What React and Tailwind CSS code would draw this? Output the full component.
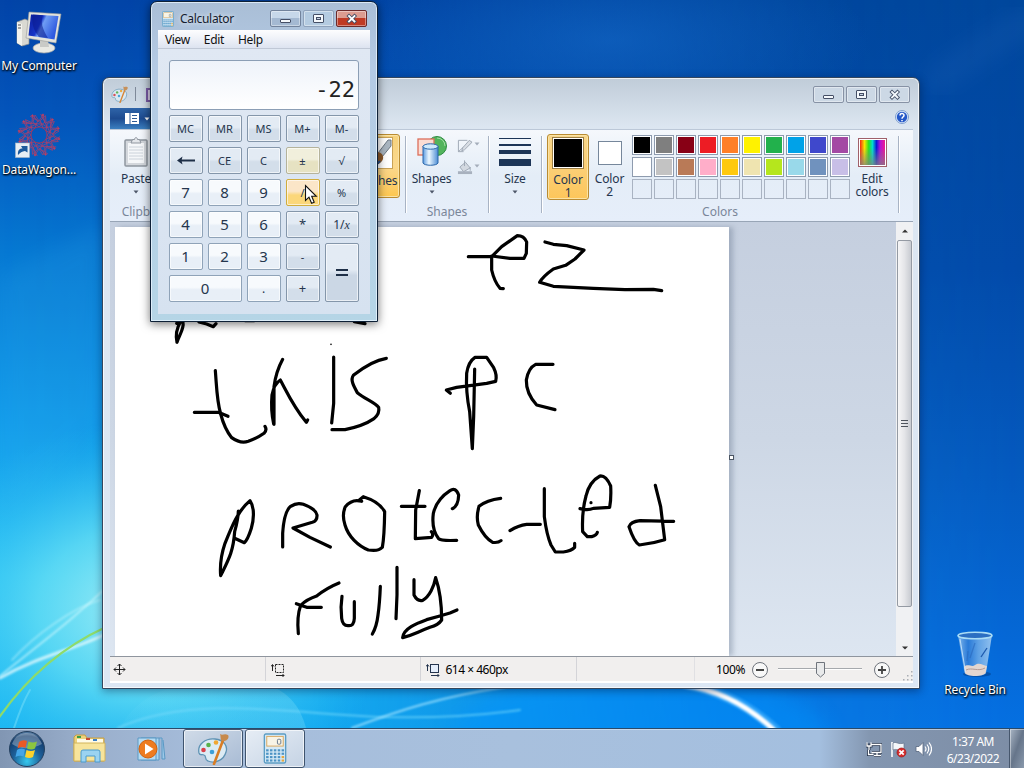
import React from "react";

const FONT = "font-['Noto_Sans','Open_Sans',sans-serif]";

function Wallpaper() {
  return (
    <svg className="absolute inset-0" width="1024" height="768" viewBox="0 0 1024 768">
      <defs>
        <linearGradient id="wl" x1="0" y1="0" x2="0" y2="1">
          <stop offset="0" stopColor="#0244a8" />
          <stop offset="0.15" stopColor="#0455bb" />
          <stop offset="0.33" stopColor="#0679d3" />
          <stop offset="0.55" stopColor="#109bea" />
          <stop offset="0.75" stopColor="#22bdf3" />
          <stop offset="0.95" stopColor="#16b4f2" />
        </linearGradient>
        <linearGradient id="wr" x1="0" y1="0" x2="0" y2="1">
          <stop offset="0" stopColor="#00479c" />
          <stop offset="0.35" stopColor="#024aa9" />
          <stop offset="0.6" stopColor="#0458bd" />
          <stop offset="0.85" stopColor="#0568d8" />
          <stop offset="1" stopColor="#0472e6" />
        </linearGradient>
        <linearGradient id="wm" x1="0" x2="1">
          <stop offset="0" stopColor="#fff" stopOpacity="0" />
          <stop offset="0.3" stopColor="#fff" stopOpacity="0.15" />
          <stop offset="0.7" stopColor="#fff" stopOpacity="0.8" />
          <stop offset="1" stopColor="#fff" />
        </linearGradient>
        <mask id="mr"><rect width="1024" height="768" fill="url(#wm)" /></mask>
        <radialGradient id="glow">
          <stop offset="0" stopColor="#b4f4f6" stopOpacity="0.95" />
          <stop offset="0.45" stopColor="#6fe4f5" stopOpacity="0.7" />
          <stop offset="1" stopColor="#28c0f5" stopOpacity="0" />
        </radialGradient>
        <radialGradient id="topglow">
          <stop offset="0" stopColor="#1469c8" stopOpacity="0.6" />
          <stop offset="1" stopColor="#1469c8" stopOpacity="0" />
        </radialGradient>
        <linearGradient id="beam" x1="0" x2="1">
          <stop offset="0" stopColor="#8fe5fa" stopOpacity="0.1" />
          <stop offset="1" stopColor="#9deefa" stopOpacity="0.6" />
        </linearGradient>
        <filter id="b1" x="-20%" y="-20%" width="140%" height="140%"><feGaussianBlur stdDeviation="1" /></filter>
        <filter id="b6" x="-30%" y="-30%" width="160%" height="160%"><feGaussianBlur stdDeviation="10" /></filter>
      </defs>
      <rect width="1024" height="768" fill="url(#wl)" />
      <rect width="1024" height="768" fill="url(#wr)" mask="url(#mr)" />
      <ellipse cx="610" cy="40" rx="260" ry="90" fill="url(#topglow)" />
      <ellipse cx="150" cy="610" rx="250" ry="190" fill="url(#glow)" />
      <ellipse cx="640" cy="740" rx="190" ry="70" fill="#0694ff" opacity="0.45" filter="url(#b6)" />
      <path d="M0 275 L104 225 L104 420 L0 520Z" fill="#4ab8ef" opacity="0.12" filter="url(#b6)" />
      <path d="M120 728 C140 690 180 680 240 680 C285 682 300 705 306 728Z" fill="url(#beam)" opacity="0.4" />
      <g fill="none" strokeLinecap="round">
        <path d="M0 676 C45 640 75 618 112 582" stroke="#d9fbff" strokeWidth="1.6" opacity="0.7" filter="url(#b1)" />
        <path d="M0 678 C40 655 75 650 110 632" stroke="#effdff" strokeWidth="3" opacity="0.75" filter="url(#b1)" />
        <path d="M12 660 C35 635 72 608 100 600" stroke="#d9fbff" strokeWidth="1.5" opacity="0.5" filter="url(#b1)" />
        <path d="M-2 719 C25 680 60 648 106 627" stroke="#8edb6a" strokeWidth="2.2" />
        <path d="M14 728 C20 710 24 700 30 690" stroke="#8ee8fb" strokeWidth="2" opacity="0.4" />
        <path d="M118 728 C180 700 260 708 330 714 C400 720 460 718 520 710" stroke="#7bdcfb" strokeWidth="2" opacity="0.6" filter="url(#b1)" />
        <path d="M352 728 C400 710 440 697 505 687" stroke="#9fe2ff" strokeWidth="2" opacity="0.8" filter="url(#b1)" />
        <path d="M686 684 C720 691 750 706 776 730" stroke="#46b4ff" strokeWidth="10" opacity="0.6" filter="url(#b1)" />
        <path d="M684 685 C720 690 748 706 774 730" stroke="#fff" strokeWidth="5" filter="url(#b1)" />
        <path d="M940 78 C965 60 995 40 1024 24" stroke="#3a79c8" strokeWidth="30" opacity="0.12" filter="url(#b6)" />
      </g>
    </svg>
  );
}

function MyComputerIcon() {
  return (
    <svg width="48" height="44" viewBox="0 0 48 44">
      <defs>
        <linearGradient id="scr" x1="0" y1="0" x2="1" y2="0.4">
          <stop offset="0" stopColor="#0b1d9a" />
          <stop offset="0.45" stopColor="#1736c8" />
          <stop offset="0.55" stopColor="#6f9df4" />
          <stop offset="1" stopColor="#2f5ae0" />
        </linearGradient>
      </defs>
      <path d="M2 12 L10 9 L14 11 L14 34 L7 36 L2 33Z" fill="#d9d9d2" stroke="#8d8f8e" strokeWidth=".7" />
      <path d="M2 12 L7 14 L7 36 L2 33Z" fill="#f3f3ee" />
      <path d="M3 15h3M3 18h3" stroke="#555" />
      <ellipse cx="29" cy="38" rx="11" ry="5" fill="#e9e9e3" stroke="#a6a8a6" strokeWidth=".7" />
      <path d="M25 30h8l1 7h-9z" fill="#c9cac6" />
      <path d="M14 2 L46 4 L41 33 L11 28Z" fill="#e4e4dd" stroke="#999b98" strokeWidth=".6" />
      <path d="M16 4.500 L43.500 6 L39.500 29.500 L13.500 25.500Z" fill="url(#scr)" />
      <path d="M18 4.600 L28 5.200 C25 12 28 20 33 28 L24 27 C18 20 16 12 18 4.600Z" fill="#0a1a8c" opacity=".55" />
    </svg>
  );
}

function DataWagonIcon() {
  const angles = [0, 30, 60, 90, 120, 150, 180, 210, 240, 270, 300, 330];
  return (
    <svg width="50" height="46" viewBox="0 0 50 46">
      <g transform="translate(25 22)" fill="none" stroke="#a8406c" strokeWidth="0.75">
        {angles.map((a) => (
          <g key={a} transform={`rotate(${a})`}>
            <path d="M0 -8 L6 -13 L4 -20 L0 -14 L-4 -20 L-6 -13 Z" />
            <path d="M-9 -19 L8 -8" />
            <circle cx="4" cy="-20" r="0.9" fill="#c8415c" />
          </g>
        ))}
        <circle r="8" stroke="#b8324c" />
      </g>
      <rect x="1.500" y="30" width="14" height="14.500" fill="#e8eef4" stroke="#a9b7c6" strokeWidth=".6" />
      <path d="M4 42 C3.500 37 5.500 35.500 8.500 35.500 L7 33 L13.500 33 L13.500 39.500 L11 38 C8 38.500 6 39.500 4 42Z" fill="#1d5a9c" />
    </svg>
  );
}

function RecycleIcon() {
  return (
    <svg width="40" height="48" viewBox="0 0 40 48">
      <defs>
        <linearGradient id="bin" x1="0" x2="1">
          <stop offset="0" stopColor="#9cc8f0" stopOpacity=".85" />
          <stop offset=".3" stopColor="#3a82d8" stopOpacity=".7" />
          <stop offset=".6" stopColor="#7db4ea" stopOpacity=".75" />
          <stop offset="1" stopColor="#b4d6f4" stopOpacity=".8" />
        </linearGradient>
      </defs>
      <ellipse cx="22" cy="43" rx="14" ry="3" fill="#012b66" opacity=".4" />
      <path d="M3 4 L37 4 L31 42 C29 46 12 46 9.500 42Z" fill="url(#bin)" />
      <path d="M9 36 C13 32 17 37 20 34 C24 31 28 34 32 35 L30.500 42 C28 46 12 46 10 42Z" fill="#e3d6d0" />
      <path d="M11 39 C17 36 23 41 30 37" stroke="#b49b95" fill="none" />
      <path d="M26 26 L32 17" stroke="#1c59ac" strokeWidth="1.300" fill="none" />
      <path d="M13 20 L12 30 M20 12 L15 27" stroke="#2a69bd" strokeWidth="1.300" opacity=".6" />
      <ellipse cx="20" cy="4.500" rx="17" ry="3.300" fill="#2b6fc2" stroke="#a9dcf5" strokeWidth="1.600" />
      <path d="M5 8 L10.500 41" stroke="#d2ecff" strokeWidth="1" opacity=".8" />
    </svg>
  );
}

function DesktopIcon({ className, label, children }) {
  return (
    <div className={`absolute flex flex-col items-center ${className}`}>
      {children}
      <span className="whitespace-nowrap text-[12px] leading-4 tracking-[-0.15px] text-white [text-shadow:1px_1px_2px_#000,0_1px_2px_#000]">{label}</span>
    </div>
  );
}

function PaletteIcon({ size, faded }) {
  return (
    <svg width={size} height={size} viewBox="0 0 32 32" className={faded ? "opacity-90" : ""}>
      <path d="M2 20 C0 11 9 5 18 6 C27 7 31 13 29 19 C27 27 18 31 11 28 C7 27 10 23 7 22 C5 21 3 23 2 20Z" fill="#dcebf4" stroke="#5f93b4" strokeWidth="1.300" />
      <circle cx="6.500" cy="17" r="2.300" fill="#d9414a" />
      <circle cx="11.500" cy="12" r="2.300" fill="#58b24c" />
      <circle cx="19" cy="9.500" r="2.300" fill="#f0a733" />
      <circle cx="15" cy="19" r="2.300" fill="#3d9fd8" />
      <path d="M26.500 6 L17 31" stroke="#d97d24" strokeWidth="2.600" strokeLinecap="round" />
      <path d="M23 1 C26 3 27 0 31 2 C33 5 29 9 25 8 C23 6 24 4 23 1Z" fill="#c78a4c" />
    </svg>
  );
}

function CalcIcon({ w, h }) {
  const cols = [4, 8, 12, 16, 20];
  const rows = [18, 21.5, 25, 28.5];
  return (
    <svg width={w} height={h} viewBox="0 0 24 32">
      <rect x="1" y="1" width="22" height="30" rx="1.500" fill="#d5e9f5" stroke="#5c9dc4" strokeWidth="1.400" />
      <rect x="3.500" y="3.500" width="17" height="10" fill="#f8f4e6" stroke="#d9a860" />
      <rect x="14.500" y="6.500" width="3.500" height="5" rx="1" fill="none" stroke="#66788a" />
      {rows.map((y) =>
        cols.map((x) => (
          <rect key={`${x}-${y}`} x={x - 1.2} y={y - 1.2} width="2.600" height="2.200" fill={x === 20 && y > 24 ? "#e7a63c" : "#4c93c4"} />
        ))
      )}
    </svg>
  );
}

function Glyph({ kind, light }) {
  const c = light ? "#fff" : "#f4f8fc";
  const s = "#454f66";
  return (
    <svg width="13" height="12" viewBox="0 0 13 12">
      {kind === "min" && <rect x="1.500" y="6.500" width="10" height="3" rx=".5" fill={c} stroke={s} />}
      {kind === "max" && (
        <g fill={c} stroke={s}>
          <rect x="1.500" y="1.500" width="10" height="8" rx=".5" />
          <rect x="4.500" y="4.500" width="4" height="2" fill="#c8d4e4" />
        </g>
      )}
      {kind === "close" && (
        <g strokeLinecap="square">
          <path d="M4 3 L9.500 8.500 M9.500 3 L4 8.500" stroke={s} strokeWidth="3.600" />
          <path d="M4 3 L9.500 8.500 M9.500 3 L4 8.500" stroke={c} strokeWidth="1.800" />
        </g>
      )}
    </svg>
  );
}

function WinButtons({ active }) {
  const base = "flex h-[17px] w-[31px] items-center justify-center rounded-[2px] border shadow-[inset_0_0_0_1px_rgba(255,255,255,.4)]";
  const plain = active
    ? "border-[#72839c] bg-linear-to-b from-[#c7d8ea] from-45% to-[#a4b9d2] to-50%"
    : "border-[#8792a5] bg-[#ccd8e5]";
  return (
    <div className="flex gap-[2px]">
      <div className={`${base} ${plain}`}><Glyph kind="min" /></div>
      <div className={`${base} ${active ? "border-[#8fa2bb] bg-[#b4cbe1]" : plain}`}><Glyph kind="max" /></div>
      <div className={`${base} ${active ? "border-[#6b2a2a] bg-linear-to-b from-[#dc9c90] from-45% to-[#bf3a24] to-50%" : plain}`}>
        <Glyph kind="close" light={active} />
      </div>
    </div>
  );
}

function Down({ className = "" }) {
  return (
    <svg width="6" height="4" viewBox="0 0 6 4" className={className}>
      <path d="M0.500 0.500h5L3 3.500z" fill="currentColor" />
    </svg>
  );
}

const RIBBON_TEXT = "text-center text-[12px] leading-[13px] tracking-[-0.15px] text-[#26364f]";
const GROUP_LABEL = "text-center text-[12px] leading-4 text-[#7a8699]";

function Sep() {
  return <div className="mt-[6px] h-[77px] w-px shrink-0 bg-[#a8b3c4] shadow-[1px_0_0_#fff]" />;
}

const SWATCHES = [
  ["#000000", "#7f7f7f", "#880015", "#ed1c24", "#ff7f27", "#fff200", "#22b14c", "#00a2e8", "#3f48cc", "#a349a4"],
  ["#ffffff", "#c3c3c3", "#b97a57", "#ffaec9", "#ffc90e", "#efe4b0", "#b5e61d", "#99d9ea", "#7092be", "#c8bfe7"],
  [null, null, null, null, null, null, null, null, null, null],
];

function Ribbon() {
  return (
    <div className="flex h-[92px] border-b border-[#98a5b6] bg-linear-to-b from-[#f5f8fc] via-[#e4edf7] to-[#e6eefa]">
      <div className="flex w-[241px] shrink-0 flex-col">
        <div className="flex w-[52px] flex-col items-center pt-[6px]">
          <svg width="24" height="32" viewBox="0 0 24 32">
            <rect x="1" y="4" width="22" height="26" rx="1" fill="#d3d7dc" stroke="#8f969f" strokeWidth="1.500" />
            <rect x="4" y="7" width="16" height="20" fill="#f5f7f9" />
            <path d="M5 11h14M5 14h14M5 17h14M5 20h14M5 23h14" stroke="#cbd2da" />
            <path d="M7 7 L8.500 3.500 H10.500 C10.500 1 13.500 1 13.500 3.500 H15.500 L17 7Z" fill="#e3e6ea" stroke="#8f969f" />
          </svg>
          <span className={`${RIBBON_TEXT} mt-[4px]`}>Paste</span>
          <Down className="mt-[5px] text-[#4d5668]" />
        </div>
        <div className={`${GROUP_LABEL} mt-[10px] w-[78px]`}>Clipboard</div>
      </div>
      <div className="mt-[4px] flex h-[64px] w-[49px] shrink-0 flex-col items-center rounded-[3px] border border-[#b98b32] bg-linear-to-b from-[#f6d27c] via-[#fbd88d] to-[#fdc74f] pt-[2px] shadow-[inset_0_0_0_1px_#fbe3a4]">
        <div className="h-[32px] w-[34px] border border-[#c9a257] bg-white">
          <svg width="32" height="30" viewBox="0 0 30 30">
            <path d="M17 15 L27 2 L30 2 L30 8 L21 19Z" fill="#a9b5c0" stroke="#6c7883" />
            <path d="M16 14 C20 14 23 17 22 21 C20 27 10 30 3 28 C9 25 9 15 16 14Z" fill="#8c5a2c" />
            <path d="M3 28 C10 29 16 27 19 23" stroke="#234f8c" strokeWidth="2" fill="none" />
          </svg>
        </div>
        <span className={`${RIBBON_TEXT} mr-px mt-[5px]`}>Brushes</span>
      </div>
      <div className="w-[5px] shrink-0" />
      <Sep />
      <div className="flex w-[82px] shrink-0 flex-col">
        <div className="flex h-[74px]">
          <div className="flex w-[51px] flex-col items-center pt-[6px]">
            <svg width="30" height="30" viewBox="0 0 30 30">
              <defs>
                <linearGradient id="cyl" x1="0" x2="1">
                  <stop offset="0" stopColor="#5c9be0" />
                  <stop offset=".4" stopColor="#edf8ff" />
                  <stop offset="1" stopColor="#4d8dd4" />
                </linearGradient>
              </defs>
              <circle cx="20" cy="10" r="9.500" fill="#52b45c" stroke="#2f8c43" />
              <path d="M20 2 A8 8 0 0 1 28 10" stroke="#a3dfa4" fill="none" />
              <rect x="1" y="3" width="16" height="16" fill="#fbdcd3" stroke="#dc6f5b" strokeWidth="1.300" />
              <path d="M6 10 V27 C7 30 20 30 21 27 V10Z" fill="url(#cyl)" stroke="#2a66a9" />
              <ellipse cx="13.500" cy="10.500" rx="7.500" ry="2.700" fill="#cfe9fb" stroke="#2a66a9" />
            </svg>
            <span className={`${RIBBON_TEXT} mt-[6px]`}>Shapes</span>
            <Down className="mt-[5px] text-[#4d5668]" />
          </div>
          <div className="flex flex-col gap-[5px] pt-[8px]">
            <div className="flex items-start gap-px text-[#a4adba]">
              <svg width="16" height="16" viewBox="0 0 17 16" fill="none" stroke="#9da6b3">
                <path d="M11 2H1.500v12H7M1.500 14 L7 9" />
                <path d="M5 13 L6 10 L13 2 L16 4 L8 12Z" fill="#d8dde4" />
              </svg>
              <Down className="mt-[4px]" />
            </div>
            <div className="flex items-start gap-px text-[#a4adba]">
              <svg width="16" height="16" viewBox="0 0 17 16">
                <path d="M3 8 L9 3 L14 9 L7 13Z" fill="#d3d9e1" stroke="#9da6b3" />
                <path d="M8 1v6M14 8v4" stroke="#9da6b3" />
                <rect x="1" y="12.500" width="15" height="3" fill="#a8b1be" />
              </svg>
              <Down className="mt-[5px]" />
            </div>
          </div>
        </div>
        <div className={GROUP_LABEL}>Shapes</div>
      </div>
      <Sep />
      <div className="flex w-[52px] shrink-0 flex-col items-center pt-[8px]">
        <div className="flex h-[28px] w-[32px] flex-col justify-between">
          <div className="h-px bg-[#1d3557]" />
          <div className="h-[2px] bg-[#1d3557]" />
          <div className="h-[4px] bg-[#1d3557]" />
          <div className="h-[7px] bg-[#1d3557]" />
        </div>
        <span className={`${RIBBON_TEXT} mt-[6px]`}>Size</span>
        <Down className="mt-[5px] text-[#4d5668]" />
      </div>
      <Sep />
      <div className="flex w-[356px] shrink-0 flex-col">
        <div className="flex h-[74px] pl-[5px]">
          <div className="mt-[4px] flex h-[66px] w-[42px] flex-col items-center rounded-[3px] border border-[#b98b32] bg-linear-to-b from-[#f8d68a] via-[#fbcf77] to-[#fdc65a] pt-[2px] shadow-[inset_0_0_0_1px_#fbe3a4]">
            <div className="h-[32px] w-[32px] border border-[#9c7f46] bg-white p-px"><div className="h-full bg-black" /></div>
            <p className={`${RIBBON_TEXT} mt-[4px] w-[34px]`}>Color 1</p>
          </div>
          <div className="mt-[4px] flex w-[42px] flex-col items-center pt-[7px]">
            <div className="h-[24px] w-[24px] border border-[#76879b] bg-white" />
            <p className={`${RIBBON_TEXT} mr-px mt-[7px] w-[34px]`}>Color 2</p>
          </div>
          <div className="ml-px mt-[5px] flex flex-col gap-[2px]">
            {SWATCHES.map((row, r) => (
              <div key={r} className="flex gap-[2px]">
                {row.map((c, i) => (
                  <div key={i} className={`h-[20px] w-[20px] border p-px ${c ? "border-[#8e9bae] bg-white" : "border-[#a9b3c2] bg-transparent"}`}>
                    {c && <div className="h-full" style={{ background: c }} />}
                  </div>
                ))}
              </div>
            ))}
          </div>
          <div className="ml-px flex w-[42px] flex-col items-center pt-[8px]">
            <div className="h-[29px] w-[29px] border border-[#a0606a] bg-white p-px">
              <div className="h-full bg-[linear-gradient(to_bottom,transparent_30%,rgba(128,128,128,.75)),linear-gradient(to_right,#f32a10,#f6e600_18%,#28e020_35%,#00dccf_50%,#0b18d8_66%,#b010d8_80%,#f01890)]" />
            </div>
            <p className={`${RIBBON_TEXT} mt-[5px] w-[36px]`}>Edit colors</p>
          </div>
        </div>
        <div className={GROUP_LABEL}>Colors</div>
      </div>
      <Sep />
    </div>
  );
}

function Handwriting() {
  return (
    <svg width="614" height="429" viewBox="115 227 614 429" className="block">
      <g fill="none" stroke="#000" strokeWidth="9.600" strokeLinecap="round" strokeLinejoin="round">
        <g transform="translate(170 220) scale(.33333)">
          <path d="M895 110 H965 L995 80 L1042 47 Q1062 47 1070 66 L1069 100 L1062 115 H1020 L965 108 L965 150 Q973 185 990 205 L1000 206" />
          <path d="M1125 66 L1150 73 L1190 77 L1242 90 L1215 117 L1187 136 L1150 147 Q1118 170 1109 187 L1150 199 L1270 205 L1365 209 L1450 208 L1475 212" />
          <path d="M20 310 L26 300 M39 308 C43 325 28 345 21 367 C16 345 20 325 31 306" />
          <path d="M87 306 L110 312 L130 320 L138 311 M226 302 H252 M553 305 L585 311" />
          <path d="M136 452 C140 500 140 540 152 582 C162 620 172 637 185 653 Q211 672 235 664 Q266 652 282 640 Q292 630 285 619" />
          <path d="M73 577 H145 L174 589" />
          <path d="M338 418 Q318 455 312 500 V613 M311 612 Q302 570 306 525 Q312 492 331 480 C350 515 370 560 409 607 L413 600" />
          <path d="M483 373 v.1" strokeWidth="5" />
          <path d="M491 411 V550 L485 609" />
          <path d="M649 415 Q605 422 550 466 C540 480 552 500 562 518 C585 537 615 547 626 562 Q630 580 612 596 Q580 618 525 629 H486" />
          <path d="M841 520 L829 510 L860 502 L950 490 L977 484 Q982 465 971 443 L950 412 H915 Q895 425 890 460 Q887 515 899 575 L907 686 M914 447 L911 590 L907 686" />
          <path d="M1149 433 H1097 Q1075 444 1069 480 Q1068 520 1100 555 L1155 569" />
        </g>
        <g transform="translate(190 460) scale(.33333)">
          <path d="M145 153 Q145 175 134 215 C130 275 115 300 92 347 Q88 300 105 250 C125 200 145 150 180 122 C196 145 190 185 184 205 Q173 240 163 248 L134 235" />
          <path d="M278 261 V220 Q282 155 302 139 Q321 126 340 133 Q378 147 381 165 Q382 182 367 187 L309 204 L360 232 L421 261" />
          <path d="M515 124 Q487 115 466 140 Q455 165 465 195 C475 230 505 258 535 270 Q566 275 577 262 Q583 230 584 155 Q569 125 520 110 L509 119" />
          <path d="M634 139 H705 M688 92 L677 150 L676 236 L725 232 Q732 223 724 215" />
          <path d="M787 146 Q805 138 806 105 Q797 80 780 92 Q740 118 730 160 Q724 207 745 235 Q752 243 800 241" />
          <path d="M932 115 Q890 120 867 139 Q858 170 865 195 Q885 235 908 247 Q925 249 933 242" />
          <path d="M960 212 Q985 196 1010 193 H1051 M1063 86 V170 Q1070 225 1083 255 L1096 276 H1120 Q1145 272 1154 262 V250" />
          <path d="M1170 146 Q1195 152 1210 145 L1259 142 Q1264 115 1262 78 Q1248 46 1230 48 Q1198 65 1188 108 Q1175 155 1178 215 L1192 230 H1205 Q1220 226 1222 217 M1203 128v.1" />
          <path d="M1396 76 L1412 140 L1424 239 Q1390 250 1348 255 Q1332 245 1317 200 Q1322 185 1350 182 L1451 184" />
          <path d="M447 369 Q410 384 380 408 Q350 418 332 436 Q320 470 325 521 M319 431 L350 442 H394" />
          <path d="M456 409 Q451 440 455 475 Q458 498 475 497 Q492 499 493 475 V425 M571 379 Q569 430 564 465 Q560 500 547 522 M621 322 V405 L618 476" />
          <path d="M672 359 V405 Q682 425 698 421 C718 410 732 380 737 353 C748 385 755 420 755 480 Q745 495 720 502 C680 517 670 525 638 533 C640 505 680 490 710 479 Q750 468 780 459 L801 450" />
        </g>
      </g>
    </svg>
  );
}

function PaintWindow() {
  return (
    <div className="absolute left-[102px] top-[77px] flex h-[612px] w-[818px] flex-col rounded-t-[7px] border border-[#35475e] bg-linear-to-b from-[#c0ccd8] via-[#dce6f1] via-8% to-[#dce7f4] pl-[7px] pr-[6px] shadow-[inset_0_0_0_1px_rgba(255,255,255,.7),0_2px_8px_rgba(0,20,60,.45)]">
      <div className="flex h-[30px] shrink-0 justify-between">
        <div className="flex h-[18px] gap-[7px] pl-px pt-[8px]">
          <PaletteIcon size={17} faded />
          <div className="mt-px h-[14px] w-px bg-[#7e8999]" />
          <div className="ml-[3px] mt-[2px] h-[14px] w-[14px] shrink-0 border-2 border-[#7a5ba6] bg-[#d9d0ea]" />
        </div>
        <div className="pr-[3px] pt-[8px]"><WinButtons /></div>
      </div>
      <div className="flex h-[22px] shrink-0 justify-between border-b border-[#bcc8d8]">
        <div className="flex h-[21px] w-[56px] items-center bg-linear-to-b from-[#2f64a8] via-[#1d4b90] to-[#3b7fc0] pl-[15px]">
          <svg width="14" height="11" viewBox="0 0 14 11">
            <rect width="14" height="11" fill="#fff" />
            <path d="M5 0v11" stroke="#2e5b97" />
            <path d="M7 2.500h5M7 5.500h5M7 8.500h5" stroke="#2e5b97" />
          </svg>
          <Down className="ml-[5px] text-white" />
        </div>
        <svg width="16" height="16" viewBox="0 0 16 16" className="mr-[3px] mt-px">
          <circle cx="8" cy="8" r="6.500" fill="#dce9fa" stroke="#7f9fd0" />
          <circle cx="8" cy="8" r="5.200" fill="#2558c8" />
          <path d="M6 6.500 C6 4 10 4 10 6.300 C10 8 8 8 8 9.700 M8 11v1.200" fill="none" stroke="#fff" strokeWidth="1.500" />
        </svg>
      </div>
      <Ribbon />
      <div className="flex h-[434px] shrink-0 justify-between overflow-hidden bg-linear-to-b from-[#c5cfdf] via-[#cdd7e5] to-[#dde6f1] pl-[5px]">
        <div className="relative mt-[5px] h-[429px] w-[614px] bg-white shadow-[4px_0_5px_rgba(90,105,130,.35)]">
          <Handwriting />
          <div className="absolute left-[614px] top-[228px] h-[5px] w-[5px] border border-[#4b5563] bg-white" />
        </div>
        <div className="flex w-[17px] flex-col items-center bg-[#f0f1f3]">
          <svg width="6" height="4" viewBox="0 0 8 5" className="mt-[7px] shrink-0"><path d="M0 4.500 L4 0.500 L8 4.500Z" fill="#333" /></svg>
          <div className="mt-[7px] flex h-[367px] w-[15px] shrink-0 flex-col items-center justify-center gap-[2px] rounded-[2px] border border-[#949aa3] bg-linear-to-r from-[#f6f6f7] via-[#e4e5e8] to-[#c8cbd1]">
            <div className="h-px w-[7px] bg-[#4d535c]" />
            <div className="h-px w-[7px] bg-[#4d535c]" />
            <div className="h-px w-[7px] bg-[#4d535c]" />
          </div>
          <svg width="6" height="4" viewBox="0 0 8 5" className="mt-[39px] shrink-0"><path d="M0 0.500 L4 4.500 L8 0.500Z" fill="#333" /></svg>
        </div>
      </div>
      <div className="flex h-[27px] shrink-0 border-b-2 border-t border-b-white border-t-[#8f959e] bg-[#f1efee] text-[12px] text-black">
        <div className="flex w-[156px] items-center border-r border-[#d4d4d8] pl-[3px] pt-px">
          <svg width="13" height="13" viewBox="0 0 13 13" stroke="#222" fill="none">
            <path d="M6.500 1v11M1 6.500h11M4.500 3l2-2 2 2M4.500 10l2 2 2-2M3 4.500l-2 2 2 2M10 4.500l2 2-2 2" />
          </svg>
        </div>
        <div className="flex w-[156px] items-center border-r border-[#d4d4d8] pl-[5px] pt-px">
          <svg width="14" height="14" viewBox="0 0 14 14" stroke="#222" fill="none">
            <path d="M1.500 8V2M0 3.500l1.500-2 1.500 2M5 12.500h8M11.500 11l1.500 1.500-1.500 1.500" />
            <rect x="4.500" y="1.500" width="8" height="8" strokeDasharray="2 1" />
          </svg>
        </div>
        <div className="flex w-[156px] items-center gap-[5px] border-r border-[#d4d4d8] pl-[5px] pt-[2px]">
          <svg width="14" height="14" viewBox="0 0 14 14" stroke="#24344e" fill="none">
            <path d="M1.500 8V2M0 3.500l1.500-2 1.500 2M5 12.500h8M11.500 11l1.500 1.500-1.500 1.500" />
            <rect x="4.500" y="1.500" width="8" height="8" fill="#e5eefb" />
          </svg>
          <span className="whitespace-nowrap tracking-[-0.5px]">614 × 460px</span>
        </div>
        <div className="w-[118px] border-r border-[#e0e0e3]" />
        <div className="flex flex-1 items-center pl-[20px] pt-[2px]">
          <span className="ml-px w-[30px] whitespace-nowrap tracking-[-0.4px]">100%</span>
          <svg width="18" height="18" viewBox="0 0 18 18" className="ml-[5px]">
            <circle cx="9" cy="9" r="7.500" fill="#f8f8f8" stroke="#6f747c" />
            <path d="M5 9h8" stroke="#444" strokeWidth="2" />
          </svg>
          <svg width="84" height="18" viewBox="0 0 84 18" className="ml-[9px]">
            <path d="M0 7.500h84" stroke="#a6a9ad" />
            <path d="M0 8.500h84" stroke="#fff" />
            <path d="M38.500 1.500h8v11l-4 3.500-4-3.500z" fill="#e9eaeb" stroke="#6f747c" />
          </svg>
          <svg width="18" height="18" viewBox="0 0 18 18" className="ml-[11px]">
            <circle cx="9" cy="9" r="7.500" fill="#f8f8f8" stroke="#6f747c" />
            <path d="M5 9h8M9 5v8" stroke="#444" strokeWidth="1.800" />
          </svg>
          <svg width="10" height="10" viewBox="0 0 10 10" className="ml-[12px] mt-[11px]" fill="#a9adb3">
            <path d="M8 0h1.500v1.500H8zM8 4h1.500v1.500H8zM8 8h1.500v1.500H8zM4 4h1.500v1.500H4zM4 8h1.500v1.500H4zM0 8h1.500v1.500H0z" />
          </svg>
        </div>
      </div>
    </div>
  );
}

const KEYS = [
  ["MC", "fn"], ["MR", "fn"], ["MS", "fn"], ["M+", "fn"], ["M-", "fn"],
  ["back", "fn"], ["CE", "fn"], ["C", "fn"], ["±", "warm"], ["√", "fn"],
  ["7", "num"], ["8", "num"], ["9", "num"], ["/", "hot"], ["%", "fn"],
  ["4", "num"], ["5", "num"], ["6", "num"], ["*", "fn"], ["1/x", "fn"],
  ["1", "num"], ["2", "num"], ["3", "num"], ["-", "fn"], ["=", "eq"],
  ["0", "zero"], [".", "num"], ["+", "fn"],
];

const KEY_STYLE = {
  fn: "border-[#8496aa] bg-linear-to-b from-[#e3ebf4] from-45% to-[#d3deea] to-55% text-[11px]",
  num: "border-[#8fa3b8] bg-linear-to-b from-[#f7fafd] from-45% to-[#e8eff7] to-55% text-[15px]",
  zero: "col-span-2 border-[#8fa3b8] bg-linear-to-b from-[#f7fafd] from-45% to-[#e8eff7] to-55% text-[15px]",
  eq: "row-span-2 border-[#8496aa] bg-linear-to-b from-[#e3ebf4] from-45% to-[#cbd7e5] to-55%",
  warm: "border-[#b5b39b] bg-linear-to-b from-[#f1efdc] from-45% to-[#e6e2c2] to-55% text-[11px]",
  hot: "border-[#d1ad3d] bg-linear-to-b from-[#fbe6c8] from-45% to-[#fbd77a] to-60% text-[11px]",
};

function keyFace(label) {
  if (label === "back")
    return (
      <svg width="18" height="9" viewBox="0 0 18 9">
        <path d="M3 4.500h15" stroke="#1e2f47" strokeWidth="2" />
        <path d="M0 4.500L5.500 0.500L4.500 4.500L5.500 8.500Z" fill="#1e2f47" />
      </svg>
    );
  if (label === "=")
    return (
      <div className="flex w-[12px] flex-col gap-[3px]">
        <div className="h-[2px] bg-[#1e2f47]" />
        <div className="h-[2px] bg-[#1e2f47]" />
      </div>
    );
  if (label === "1/x")
    return <span className="text-[12px]">1/<i className="font-['Liberation_Serif',serif]">x</i></span>;
  if (label === ".") return <span className="text-[12px]">.</span>;
  if (label === "+" || label === "*") return <span className="text-[13px]">{label}</span>;
  return label;
}

function Calculator() {
  return (
    <div className="absolute left-[150px] top-px flex h-[321px] w-[228px] flex-col rounded-t-[7px] border border-[#0d2036] bg-linear-to-b from-[#a9bed6] via-[#b4cae4] via-20% to-[#b5d5e6] px-[7px] pb-[7px] shadow-[inset_0_0_0_1px_rgba(235,245,255,.75),0_2px_10px_rgba(0,0,0,.55)]">
      <div className="flex h-[28px] shrink-0 justify-between">
        <div className="flex items-center gap-[5px] pl-[4px] pt-[6px]">
          <CalcIcon w={12} h={16} />
          <span className="ml-px text-[12px] leading-4 tracking-[-0.3px] text-[#15202e] [text-shadow:0_0_5px_#fff]">Calculator</span>
        </div>
        <div className="pr-[3px] pt-[8px]"><WinButtons active /></div>
      </div>
      <div className="flex h-[19px] shrink-0 items-center gap-[14px] border-b border-[#c0c8d6] bg-linear-to-b from-[#fdfdfe] via-[#eef1f8] to-[#dde3f0] pl-[7px] pt-[2px] text-[12px] tracking-[-0.35px] text-[#111]">
        <span>View</span><span>Edit</span><span>Help</span>
      </div>
      <div className="flex-1 bg-[#d9e4f1] bg-linear-to-b from-[#e0e8f3] to-[#d6e2f0] pl-[11px] pt-[11px]">
        <div className="flex h-[50px] w-[190px] items-end justify-end rounded-[3px] border border-[#8b9eb5] bg-linear-to-b from-[#eef3fa] to-white pb-[4px] pr-[3px] font-['DejaVu_Sans_Mono',monospace] text-[22px] leading-[30px] text-[#222]">-22</div>
        <div className="mt-[5px] grid grid-cols-[repeat(5,34px)] grid-rows-[repeat(6,27px)] gap-[5px]">
          {KEYS.map(([label, kind]) => (
            <div key={label} className={`flex items-center justify-center rounded-[2px] border pr-px leading-none text-[#25364d] shadow-[inset_0_0_0_1px_rgba(255,255,255,.6)] ${KEY_STYLE[kind]}`}>
              {keyFace(label)}
            </div>
          ))}
        </div>
      </div>
    </div>
  );
}

function StartOrb() {
  return (
    <svg width="38" height="38" viewBox="0 0 38 38">
      <defs>
        <radialGradient id="orb" cx=".5" cy=".85" r=".9">
          <stop offset="0" stopColor="#35c8ee" />
          <stop offset=".45" stopColor="#1d5f98" />
          <stop offset=".8" stopColor="#123b6b" />
          <stop offset="1" stopColor="#7ea3c5" />
        </radialGradient>
      </defs>
      <circle cx="19" cy="19" r="17.500" fill="url(#orb)" stroke="#24405f" />
      <path d="M4 14 C7 5 14 3 19 3 C25 3 31 6 34 14 C25 19 12 20 4 14Z" fill="#fff" opacity=".3" />
      <path d="M11 12 Q15 9 19 11 L17.500 18 Q14 16 9.500 18.500Z" fill="#ea5a26" />
      <path d="M20.500 11.500 Q25 13.500 29 11.500 L27 18.500 Q23.500 20.500 19 18.500Z" fill="#8cc63f" />
      <path d="M9 20 Q13 17.500 17 19.500 L15.500 26.500 Q12 25 7.500 27Z" fill="#43a5e8" />
      <path d="M18.500 20 Q23 22 27 20 L25 27 Q21.500 29 17 27Z" fill="#fbd22d" />
    </svg>
  );
}

function Taskbar() {
  const task = "flex h-[39px] w-[60px] items-center justify-center rounded-[3px] border border-[#3f546e] shadow-[inset_0_0_0_1px_rgba(255,255,255,.65)]";
  return (
    <div className="absolute bottom-0 left-0 flex h-[40px] w-full border-t border-[#2a4a6a] bg-[linear-gradient(to_right,#8196b3,#99aecb_8%,#a6bddb_20%,#a8c0dd_50%,#a4bfdf_80%,#8396b0_85%,#7d8da5)] shadow-[inset_0_1px_0_rgba(220,235,250,.6)]">
      <div className="flex w-[183px] items-center pl-[8px]">
        <StartOrb />
        <svg width="34" height="30" viewBox="0 0 34 30" className="ml-[27px]">
          <path d="M1 3 L3 1 H12 L14 4 H31 V27 H1Z" fill="#edd27c" stroke="#c59e45" />
          <path d="M4 5h26v8H4z" fill="#fffbe6" />
          <path d="M4 3h4" stroke="#3a9c46" strokeWidth="2" /><path d="M13 5h4" stroke="#c84a34" strokeWidth="2" /><path d="M20 6h4" stroke="#3a7fc8" strokeWidth="2" />
          <path d="M1 9 H32 V27 H1Z" fill="#f7e49b" stroke="#d2b45c" />
          <path d="M8 28 V18 Q8 16 10 16 H25 Q27 16 27 18 V28 H22 V22 H13 V28Z" fill="#9bd3f1" stroke="#4b9bce" />
        </svg>
        <svg width="30" height="26" viewBox="0 0 30 26" className="ml-[30px]">
          <path d="M22 2h3v21h3L26 4" fill="#9dc9e8" stroke="#5a98c4" />
          <path d="M4 2h18v22H4z" fill="#acd5ef" stroke="#5a98c4" />
          <path d="M1 2h18v22H1z" fill="#b6dcf3" stroke="#5a98c4" />
          <circle cx="11" cy="13" r="9" fill="#ee7c20" stroke="#d0620f" />
          <path d="M8 7.500L16.500 13L8 18.500z" fill="#fff" />
        </svg>
      </div>
      <div className={`${task} bg-linear-to-br from-[#d0dbe8] to-[#a8bbd4]`}><PaletteIcon size={32} /></div>
      <div className={`${task} ml-[2px] bg-linear-to-br from-[#e6edf5] to-[#c5d3e4]`}><CalcIcon w={24} h={31} /></div>
      <div className="flex-1" />
      <div className="mr-[5px] flex items-center gap-[8px] pt-px">
        <svg width="16" height="16" viewBox="0 0 16 16" fill="none">
          <path d="M4.500 3.500h10.500v8H6M8 14.500h7M11 12v2M2.500 9v4.500h5M1 2v3h4V2M3 5v4" stroke="#26354c" strokeWidth="3" />
          <path d="M5.500 3.500h9.500v8H5.500M8 14.500h7M11 12v2M2.500 9v4.500h5M1 1.500v3.500h4V1.500M3 5v4" stroke="#fff" strokeWidth="1.300" />
        </svg>
        <svg width="17" height="17" viewBox="0 0 17 17">
          <path d="M2 1v15" stroke="#fff" strokeWidth="1.600" />
          <path d="M3 2 C6 0 8 4 14 2 V9 C9 11 7 7 3 9Z" fill="#f4f7fa" stroke="#63738a" strokeWidth=".7" />
          <circle cx="11.500" cy="11.500" r="4.500" fill="#d82c2c" stroke="#9b1c1c" strokeWidth=".7" />
          <path d="M9.300 9.300l4.400 4.400M13.700 9.300l-4.400 4.400" stroke="#fff" strokeWidth="1.700" />
        </svg>
        <svg width="17" height="16" viewBox="0 0 17 16">
          <path d="M1 5.500h3L8 1.500v13L4 10.500H1z" fill="#fff" stroke="#56667d" strokeWidth=".8" />
          <path d="M10 5.500q2 2.500 0 5M12 3.500q3.500 4.500 0 9M14 1.500q5 6.500 0 13" fill="none" stroke="#fff" strokeWidth="1.200" />
        </svg>
      </div>
      <div className="flex w-[72px] flex-col items-center pt-[4px] text-[12px] leading-[17px] tracking-[-0.5px] text-white">
        <span>1:37 AM</span><span>6/23/2022</span>
      </div>
      <div className="w-[15px] border-l border-[#46566c] bg-linear-to-br from-[#aab6c5] via-[#66758a] to-[#8a99ac] shadow-[inset_1px_1px_0_rgba(255,255,255,.4)]" />
    </div>
  );
}

export default function App() {
  return (
    <div className={`relative h-[768px] w-[1024px] overflow-hidden ${FONT}`}>
      <Wallpaper />
      <DesktopIcon className="left-[-11px] top-[10px] w-[100px] gap-[4px]" label="My Computer"><MyComputerIcon /></DesktopIcon>
      <DesktopIcon className="left-[-11px] top-[113px] w-[100px] gap-[3px]" label="DataWagon..."><DataWagonIcon /></DesktopIcon>
      <DesktopIcon className="left-[925px] top-[631px] w-[100px] gap-[3px]" label="Recycle Bin"><RecycleIcon /></DesktopIcon>
      <PaintWindow />
      <Calculator />
      <Taskbar />
      <svg className="absolute left-[304px] top-[184px]" width="14" height="21" viewBox="0 0 14 21">
        <path d="M1.500 1.500V16.500L5 13.200L7.600 19.300L10.200 18.200L7.700 12.300H12.300Z" fill="#fff" stroke="#111" strokeWidth="1.100" />
      </svg>
    </div>
  );
}
